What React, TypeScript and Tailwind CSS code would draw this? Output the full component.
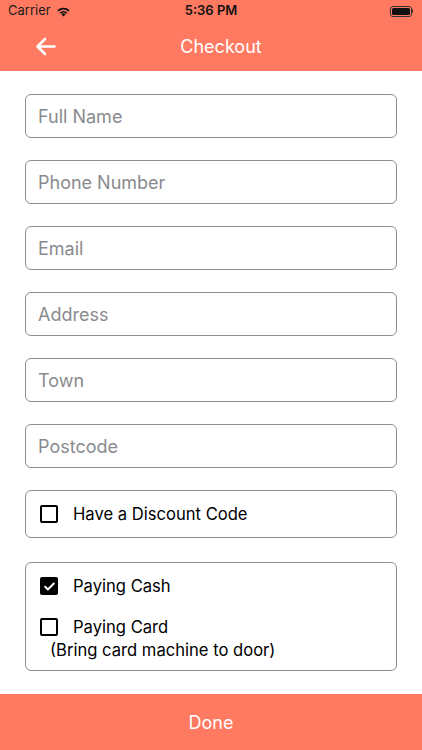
import { useState } from "react"

const font = { fontFamily: "Inter, 'Noto Sans', sans-serif" }

function Box({ checked }: { checked: boolean }) {
  return checked ? (
    <div className="w-[18px] h-[18px] rounded-[2px] bg-black flex items-center justify-center">
      <svg width="13" height="13" viewBox="0 0 24 24" fill="none" stroke="white" strokeWidth="3.5" strokeLinecap="round" strokeLinejoin="round">
        <path d="M4 12.5l5 5L20 6.5" />
      </svg>
    </div>
  ) : (
    <div className="w-[18px] h-[18px] rounded-[2px] border-2 border-black" />
  )
}

export default function App() {
  const [cash, setCash] = useState(true)
  const [discount, setDiscount] = useState(false)
  const fields = ["Full Name", "Phone Number", "Email", "Address", "Town", "Postcode"]

  return (
    <div className="w-[422px] h-[750px] bg-white flex flex-col text-black" style={font}>
      {/* Header */}
      <div className="bg-[#ff7a61] h-[71px] flex flex-col shrink-0">
        <div className="h-[22px] flex items-center justify-between px-[8px] text-white text-[13px]">
          <div className="flex items-center gap-[5px] w-[80px] text-[#1a1a1a]">
            <span className="font-normal">Carrier</span>
            <svg width="15" height="11" viewBox="0 0 16 12" fill="#111">
              <path d="M8 11.5 5.6 9a3.4 3.4 0 0 1 4.8 0z" />
              <path d="M3.7 7.1a6.2 6.2 0 0 1 8.6 0l-1.3 1.3a4.4 4.4 0 0 0-6 0z" />
              <path d="M1.3 4.7a9.6 9.6 0 0 1 13.4 0l-1.3 1.3a7.8 7.8 0 0 0-10.8 0z" />
            </svg>
          </div>
          <span className="font-semibold text-[#111]">5:36 PM</span>
          <div className="w-[80px] flex justify-end pr-[1px]">
            <div className="flex items-center">
              <div className="w-[22px] h-[11px] rounded-[3px] border border-[#333] p-[1px]">
                <div className="w-full h-full rounded-[1.5px] bg-[#111]" />
              </div>
              <div className="w-[1.5px] h-[4px] bg-[#333] rounded-r" />
            </div>
          </div>
        </div>
        <div className="flex-1 relative flex items-center justify-center">
          <svg className="absolute left-[35px] top-[15px]" width="21" height="19" viewBox="0 0 21 19" fill="none" stroke="white" strokeWidth="2.6" strokeLinecap="round" strokeLinejoin="round">
            <path d="M19.5 9.5H2.5M10 2 2.5 9.5 10 17" />
          </svg>
          <span className="text-white text-[18px] mb-[1px] ml-[20px]">Checkout</span>
        </div>
      </div>

      {/* Form */}
      <div className="flex-1 flex flex-col px-[25px] pt-[23px] gap-[22px]">
        {fields.map((f) => (
          <input
            key={f}
            placeholder={f}
            className="h-[44px] w-full rounded-[6px] border border-[#8e8e8e] px-[12px] text-[18px] placeholder:text-[#8a8a8e] outline-none"
            style={font}
          />
        ))}

        <div
          className="h-[48px] rounded-[6px] border border-[#8e8e8e] flex items-center pl-[14px] gap-[15px] cursor-pointer"
          onClick={() => setDiscount(!discount)}
        >
          <Box checked={discount} />
          <span className="text-[16.6px] mt-[1px]">Have a Discount Code</span>
        </div>

        <div className="h-[109px] mt-[2px] rounded-[6px] border border-[#8e8e8e] flex flex-col pl-[14px] pt-[11px]">
          <div className="flex items-center gap-[15px] cursor-pointer" onClick={() => setCash(true)}>
            <Box checked={cash} />
            <span className="text-[16.6px]">Paying Cash</span>
          </div>
          <div className="flex items-center gap-[15px] mt-[16px] cursor-pointer" onClick={() => setCash(false)}>
            <Box checked={!cash} />
            <span className="text-[16.6px]">Paying Card</span>
          </div>
          <span className="text-[16.6px] pl-[10px] leading-[22px] -mt-[1px]">(Bring card machine to door)</span>
        </div>
      </div>

      {/* Done */}
      <button className="h-[56px] shrink-0 bg-[#ff7a61] text-white text-[18px]" style={font}>
        Done
      </button>
    </div>
  )
}
